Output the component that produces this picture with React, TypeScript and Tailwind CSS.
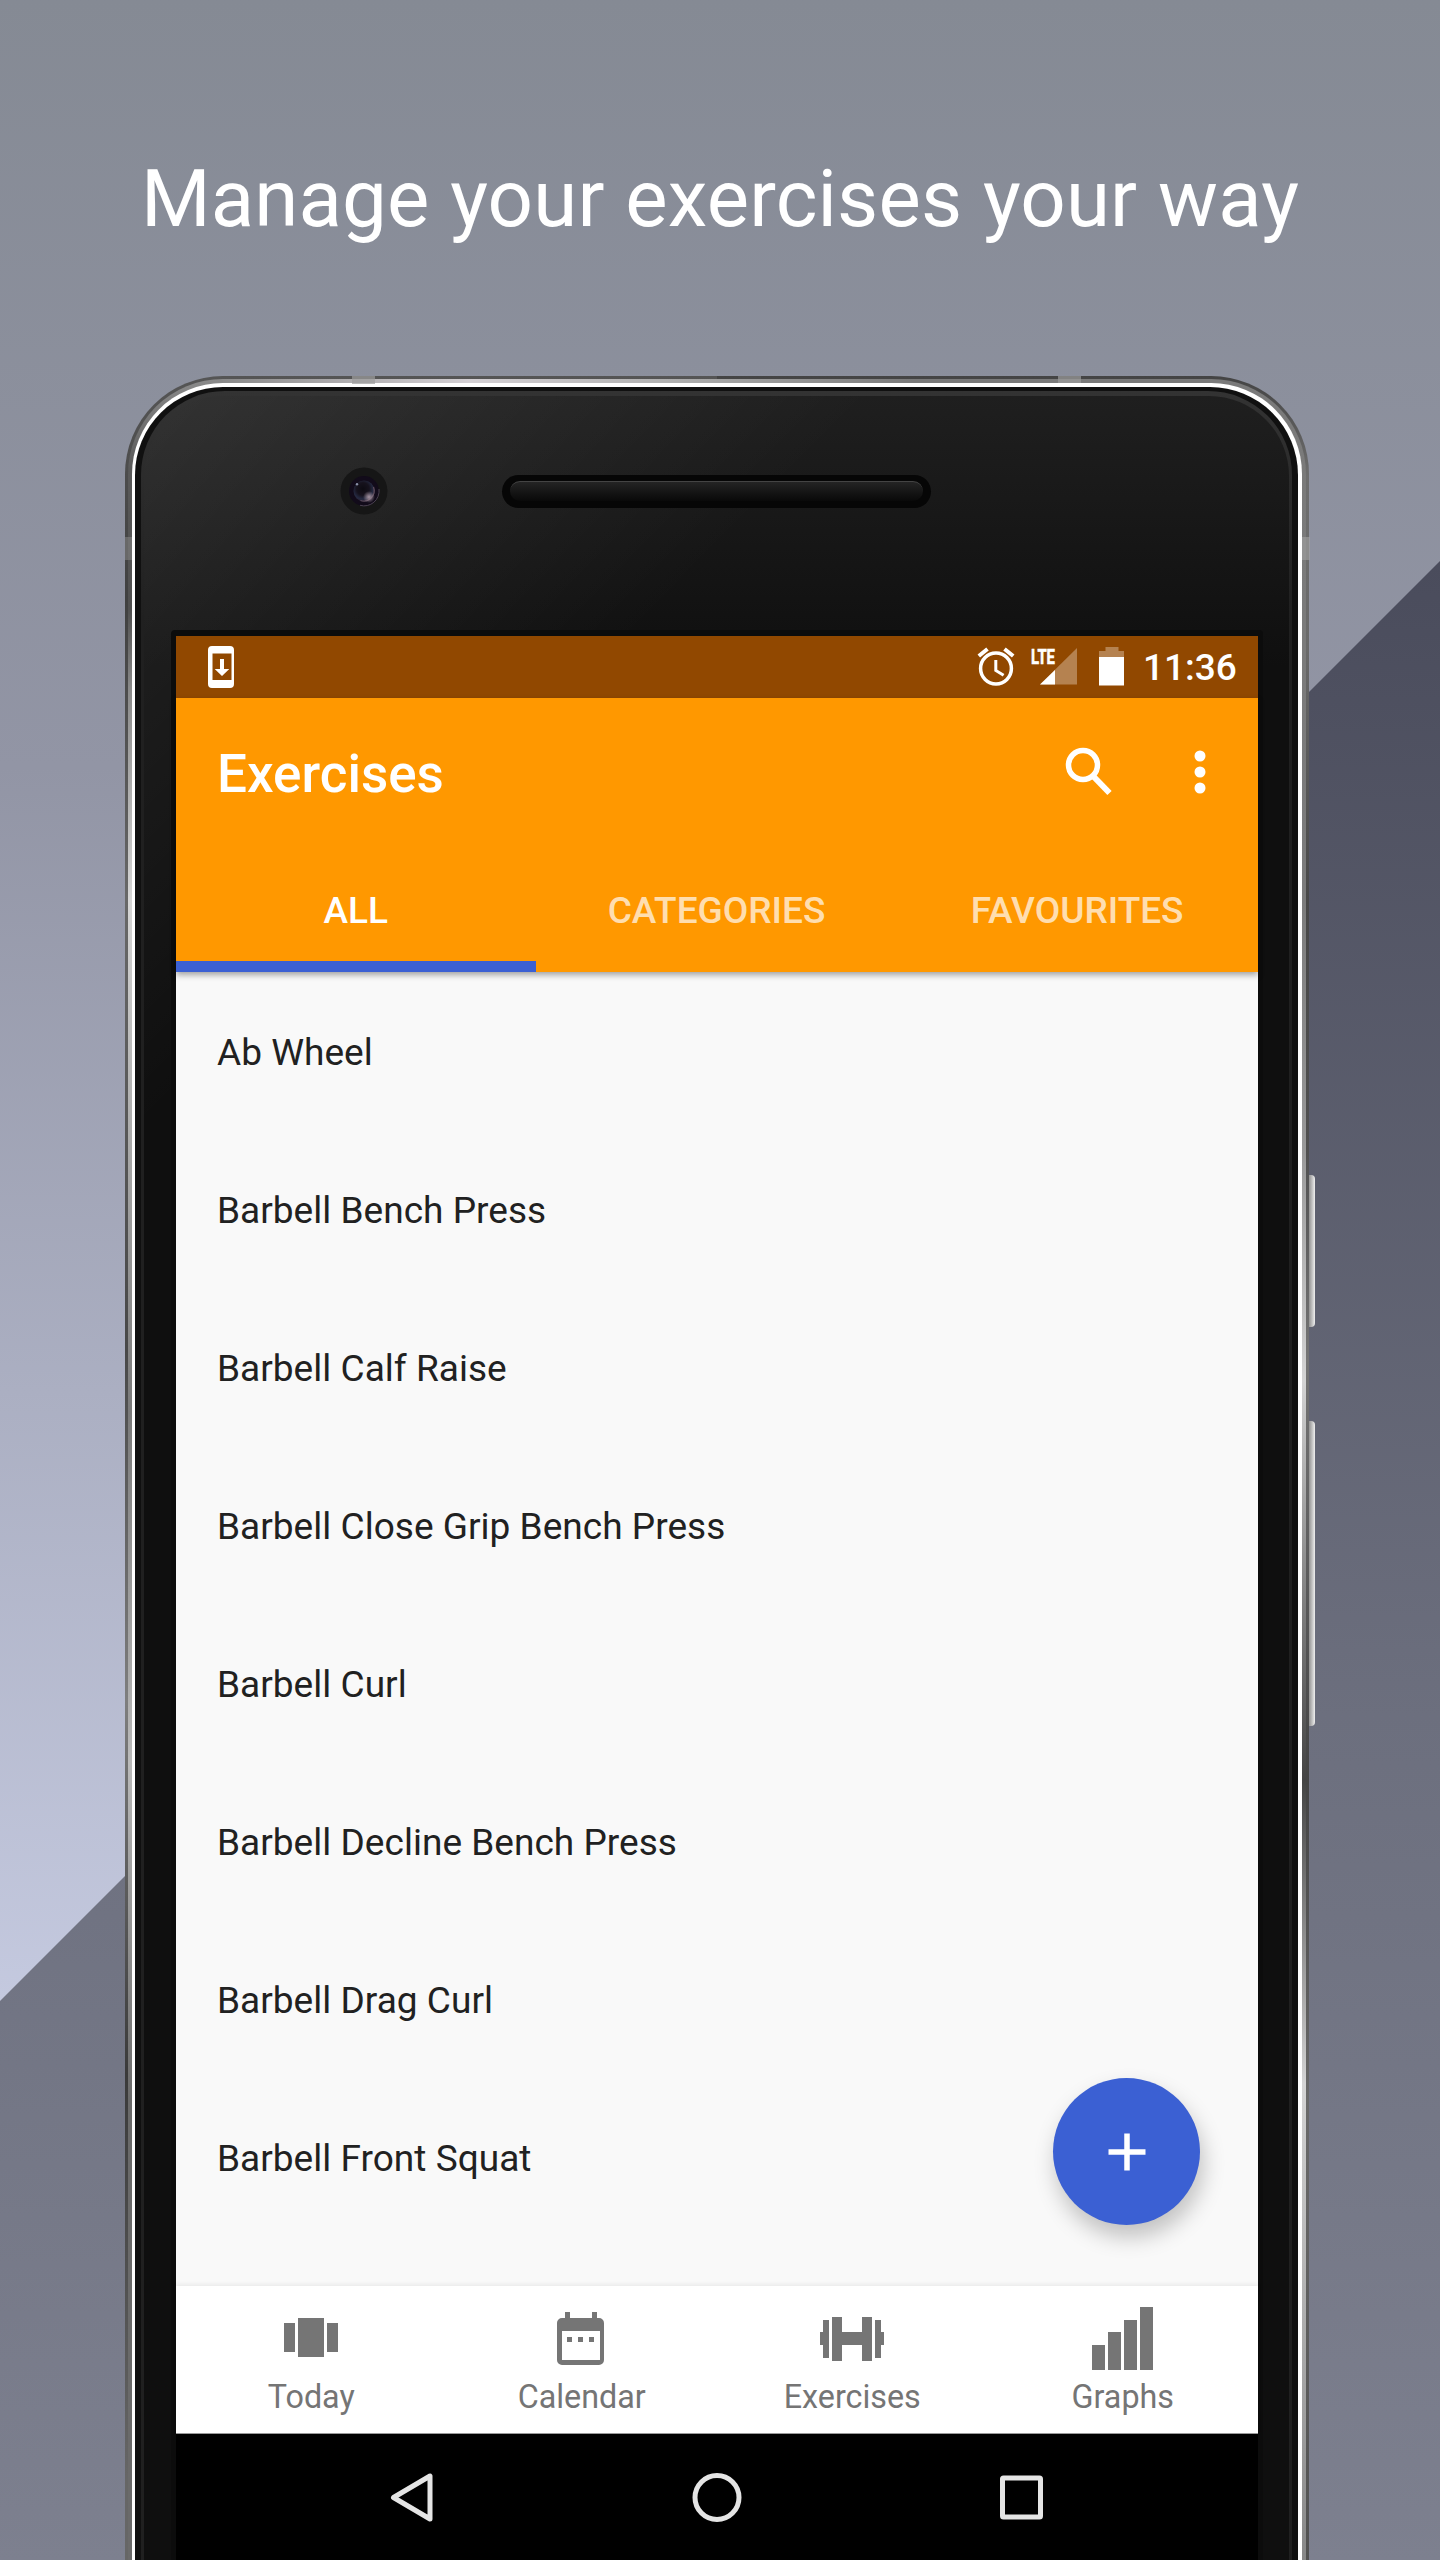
const rows = ['Ab Wheel', 'Barbell Bench Press', 'Barbell Calf Raise', 'Barbell Close Grip Bench Press', 'Barbell Curl', 'Barbell Decline Bench Press', 'Barbell Drag Curl', 'Barbell Front Squat'];

function Camera() {
  return (
    <svg className="absolute left-[215px] top-[91px]" width="48" height="48" viewBox="0 0 48 48">
      <defs>
        <radialGradient id="lens" cx=".45" cy=".4" r=".6">
          <stop offset="0" stopColor="#0d0b12" />
          <stop offset=".5" stopColor="#16121d" />
          <stop offset=".8" stopColor="#252a42" />
          <stop offset="1" stopColor="#2b2233" />
        </radialGradient>
        <radialGradient id="glint">
          <stop offset="0" stopColor="#a593a0" />
          <stop offset="1" stopColor="#a593a0" stopOpacity="0" />
        </radialGradient>
      </defs>
      <circle cx="24" cy="24" r="23.5" fill="#161616" />
      <circle cx="24" cy="24" r="15" fill="#120b1a" />
      <path d="M20 38.3A15 15 0 0 0 39 22" fill="none" stroke="#4a4050" strokeWidth="1" />
      <circle cx="24" cy="24" r="10.5" fill="url(#lens)" />
      <path d="M20.5 33.5A10.4 10.4 0 0 0 33.5 20" fill="none" stroke="#5d4c5c" strokeWidth="1.3" />
      <circle cx="29" cy="30" r="6" fill="url(#glint)" />
      <circle cx="17" cy="17.300" r="1.200" fill="#8a91a8" />
    </svg>
  );
}

function StatusBar() {
  return (
    <div className="flex h-[62px] items-center justify-between bg-[#914800] text-white">
      <svg width="80" height="62" viewBox="0 0 80 62">
        <path fillRule="evenodd" fill="#fff" d="M36 10h18a4 4 0 0 1 4 4v34a4 4 0 0 1-4 4H36a4 4 0 0 1-4-4V14a4 4 0 0 1 4-4Zm0.500 7.500v26.500h19V17.500Z" />
        <path fill="#fff" d="M44 23h4v10h5.300l-7.300 7-7.300-7h5.300Z" />
      </svg>
      <div className="flex h-full">
        <svg width="160" height="62" viewBox="0 0 160 62" fill="none" stroke="#fff">
          <circle cx="22" cy="32.500" r="15.400" strokeWidth="3.500" />
          <path d="M21.800 24v10.500l7.800 4.800" strokeWidth="3" />
          <path d="M4.800 20 13.500 13M30.500 13l8.700 7" strokeWidth="4" />
          <path d="M103 12v36.500H66Z" fill="#b58250" stroke="none" />
          <path d="M81 34v14.500H66Z" fill="#fff" stroke="none" />
          <path d="M131.500 11h13v4h5.500v34h-25V15h6.500Z" fill="#b58250" stroke="none" />
          <path d="M125 21h25v28.500h-25Z" fill="#fff" stroke="none" />
          <text x="57" y="28" fontFamily="Roboto" fontSize="21" fontWeight="700" textLength="24" lengthAdjust="spacingAndGlyphs" fill="#fff" stroke="#fff" strokeWidth=".6">LTE</text>
        </svg>
        <span className="w-[124px] pl-[9px] text-[37px] font-medium leading-[64px]">11:36</span>
      </div>
    </div>
  );
}

function Tab({ label, active }: { label: string; active?: boolean }) {
  return (
    <div className={`flex flex-1 flex-col text-center text-[37px] font-medium ${active ? 'text-white' : 'text-white/70'}`}>
      <span className="h-[112px] pr-px leading-[124px]">{label}</span>
      {active && <span className="mr-px h-[11px] bg-[#3b60d3]" />}
    </div>
  );
}

function NavItem({ label, children }: { label: string; children: React.ReactNode }) {
  return (
    <div className="flex flex-1 flex-col items-center text-[#757575]">
      <svg className="mr-px" width="80" height="84" viewBox="0 0 80 84" fill="currentColor">{children}</svg>
      <span className="-mt-px text-[32.300px] leading-[56px]">{label}</span>
    </div>
  );
}

export default function App() {
  return (
    <div className="relative h-[2560px] w-[1440px] overflow-hidden bg-linear-to-b from-[#858a94] via-[#9295a5] via-30% to-[#c4c9df] to-[78%] font-[Roboto,sans-serif]">
      <div className="absolute inset-0 bg-linear-to-b from-[#4a4c5c] from-[22%] via-[#6c6f7e] via-[67%] to-[#7d808f] [clip-path:polygon(100%_561px,100%_100%,0_100%,0_2001px)]" />
      <h1 className="relative pt-[149px] text-center text-[79.800px] leading-[100px] tracking-[0.150px] text-white [word-spacing:0.8px]">Manage your exercises your way</h1>

      <div className="absolute left-[1309px] top-[1175px] h-[152px] w-[6px] rounded-r-sm bg-linear-to-r from-[#929292] to-[#f0f0f0]" />
      <div className="absolute left-[1309px] top-[1421px] h-[305px] w-[6px] rounded-r-sm bg-linear-to-r from-[#929292] to-[#f0f0f0]" />

      <div className="relative mx-auto -left-[3px] mt-[127px] h-[2300px] w-[1184px] rounded-[98px] p-[3px] [background:linear-gradient(#555,#404040_224px,#686868_524px,#484848_974px,#7e7e7e_1324px,#3a3a3a_1699px,#666_2100px)_left/50%_100%_no-repeat,linear-gradient(#444,#6e6e6e_100px,#6a6a6a_274px,#484848_524px,#505050_774px,#757575_984px,#444_1404px,#6a6a6a_1724px,#525252_2184px)_right/50%_100%_no-repeat]">
        <div className="h-full rounded-[95px] p-1 [background:linear-gradient(90deg,#8a8a8a,#d4d0d4_25%,#b0b0b0_45%,#7a7a7a_70%,#7a7a7a)_95px_0/988px_8px_no-repeat,linear-gradient(#8a8a8a,#595959_90px,#505050_230px,#8a8a8a_310px,#d6d6d6_521px,#7a7a7a_1033px,#bbb_1383px,#6a6a6a_1721px)_left/50%_100%_no-repeat,linear-gradient(#7a7a7a,#7c7c7c_524px,#9a9a9a_774px,#d4d4d4_1001px,#888_1201px,#444_1401px,#d4d4d4_1705px,#888_2181px)_right/50%_100%_no-repeat]">
          <div className="h-full rounded-[91px] bg-white pl-[3px] pr-1 pt-1">
            <div className="h-full rounded-[88px] bg-[#101010] px-[6px] pt-1">
              <div className="h-full rounded-[84px] bg-[#202020] bg-linear-to-b from-[#333] to-[#202020] to-10% px-[3px] pt-[5px]">
                <div className="h-full rounded-[80px] [background:linear-gradient(135deg,rgba(255,255,255,0.090),transparent_520px),linear-gradient(#1f1f1f,#0f0f0f_270px)]" />
              </div>
            </div>
          </div>
        </div>
        <span className="absolute left-[227px] top-0 h-2 w-[23px] bg-[#9c9c9c]/70" />
        <span className="absolute left-[933px] top-0 h-[7px] w-[23px] bg-[#9c9c9c]/70" />
        <span className="absolute left-0 top-[161px] h-[23px] w-[7px] bg-[#8c8c8c]/50" />
        <span className="absolute -right-px top-[161px] h-[23px] w-2 bg-[#a4a4a4]/60" />
        <Camera />
        <div className="absolute left-[377px] top-[99px] h-[33px] w-[429px] rounded-full bg-[#060606] px-[8px] py-[6px]">
          <div className="h-5 rounded-full border-t border-[#444] bg-linear-to-b from-[#242424] to-[#090909]" />
        </div>
        <div className="absolute left-[46px] top-[254px] w-[1092px] rounded-t-sm bg-[#0c0c0c] px-[5px] pt-[6px]">
          <main className="flex h-[1924px] flex-col bg-[#f9f9f9]">
            <StatusBar />
            <header className="relative z-10 bg-[#ff9800] text-white shadow-[0_3px_6px_rgba(0,0,0,0.350)]">
              <div className="flex h-[151px] items-center justify-between pl-[41px]">
                <h2 className="text-[53px] font-medium leading-[62px]">Exercises</h2>
                <svg width="220" height="151" viewBox="0 0 220 151" fill="none">
                  <circle cx="45" cy="67" r="14.500" stroke="#fff" strokeWidth="5.500" />
                  <path d="M56 79 71.500 95" stroke="#fff" strokeWidth="6" />
                  <g fill="#fff"><circle cx="162" cy="58" r="5.500" /><circle cx="162" cy="74" r="5.500" /><circle cx="162" cy="90" r="5.500" /></g>
                </svg>
              </div>
              <div className="flex h-[123px]">
                <Tab label="ALL" active />
                <Tab label="CATEGORIES" />
                <Tab label="FAVOURITES" />
              </div>
            </header>
            <ul className="flex-1 pt-[2px] text-[37px] leading-[158px] tracking-[0.030px] text-[#212121]">
              {rows.map((r) => <li key={r} className="h-[158px] pl-[41px]">{r}</li>)}
            </ul>
            <nav className="flex h-[148px] shrink-0 border-b border-[#999] bg-white shadow-[0_-2px_4px_rgba(0,0,0,0.060)]">
              <NavItem label="Today"><path d="M13 37h11v29H13zM27 32h26v39H27zM56 37h11v29H56z" /></NavItem>
              <NavItem label="Calendar"><path fillRule="evenodd" d="M24 26h5v6h22v-6h5v6h2a5 5 0 0 1 5 5v37a5 5 0 0 1-5 5H21a5 5 0 0 1-5-5V37a5 5 0 0 1 5-5h3ZM21 45v29h38V45Zm5 6h5v5h-5Zm11 0h5v5h-5Zm11 0h5v5h-5Z" /></NavItem>
              <NavItem label="Exercises"><path d="M8 46h3V34h6v38h-6V59H8zM20 31h10v15h20V31h10v44H50V59H30v16H20zM63 34h6v12h3v13h-3v13h-6z" /></NavItem>
              <NavItem label="Graphs"><path d="M10 59h13v26H10zM26 46h13v39H26zM42 34h13v51H42zM58 21h13v64H58z" /></NavItem>
            </nav>
            <div className="flex h-[126px] items-center justify-center gap-[240px] bg-black">
              <svg width="64" height="64" viewBox="0 0 64 64" fill="none" stroke="#e5e5e5"><path d="M49 11v43L12.500 32.500Z" strokeWidth="5" strokeLinejoin="round" /></svg>
              <svg width="64" height="64" viewBox="0 0 64 64" fill="none" stroke="#e5e5e5"><circle cx="32" cy="32.500" r="22" strokeWidth="5" /></svg>
              <svg width="64" height="64" viewBox="0 0 64 64" fill="none" stroke="#e5e5e5"><rect x="13.500" y="13" width="38" height="39" rx="1" strokeWidth="5" /></svg>
            </div>
          </main>
        </div>
        <button aria-label="Add exercise" className="absolute left-[928px] top-[1702px] flex h-[147px] w-[147px] items-center justify-center rounded-full bg-[#3b60d3] shadow-[3px_12px_22px_rgba(0,0,0,0.230)]">
          <svg width="40" height="40" viewBox="0 0 40 40"><path d="M20 1.500v37M1.500 20h37" stroke="#fff" strokeWidth="5.500" /></svg>
        </button>
      </div>
    </div>
  );
}
